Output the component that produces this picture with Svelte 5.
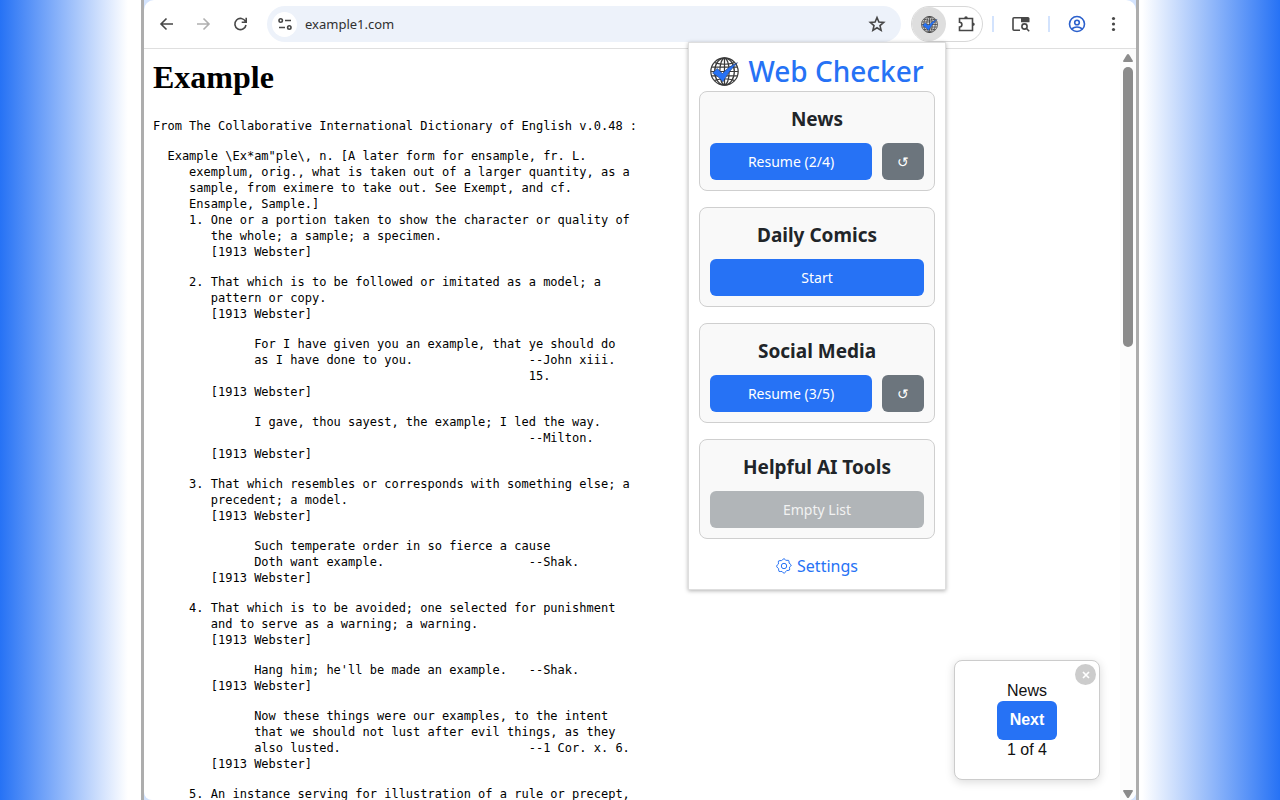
<script>
  let lists = $state([
    { name: 'News', done: 2, total: 4 },
    { name: 'Daily Comics', done: 0, total: 6 },
    { name: 'Social Media', done: 3, total: 5 },
    { name: 'Helpful AI Tools', done: 0, total: 0 }
  ]);

  let address = $state('example1.com');
  let showStepper = $state(true);

  // each entry is one block of the dictionary page
  const entries = [
    `From The Collaborative International Dictionary of English v.0.48 :`,
    `  Example \\Ex*am"ple\\, n. [A later form for ensample, fr. L.
     exemplum, orig., what is taken out of a larger quantity, as a
     sample, from eximere to take out. See Exempt, and cf.
     Ensample, Sample.]
     1. One or a portion taken to show the character or quality of
        the whole; a sample; a specimen.
        [1913 Webster]`,
    `     2. That which is to be followed or imitated as a model; a
        pattern or copy.
        [1913 Webster]`,
    `              For I have given you an example, that ye should do
              as I have done to you.                --John xiii.
                                                    15.
        [1913 Webster]`,
    `              I gave, thou sayest, the example; I led the way.
                                                    --Milton.
        [1913 Webster]`,
    `     3. That which resembles or corresponds with something else; a
        precedent; a model.
        [1913 Webster]`,
    `              Such temperate order in so fierce a cause
              Doth want example.                    --Shak.
        [1913 Webster]`,
    `     4. That which is to be avoided; one selected for punishment
        and to serve as a warning; a warning.
        [1913 Webster]`,
    `              Hang him; he'll be made an example.   --Shak.
        [1913 Webster]`,
    `              Now these things were our examples, to the intent
              that we should not lust after evil things, as they
              also lusted.                          --1 Cor. x. 6.
        [1913 Webster]`,
    `     5. An instance serving for illustration of a rule or precept,`
  ];

  function label(list) {
    if (list.total === 0) return 'Empty List';
    return list.done > 0 ? `Resume (${list.done}/${list.total})` : 'Start';
  }

  function advance(list) {
    list.done = (list.done + 1) % (list.total + 1);
  }

  function reset(list) {
    list.done = 0;
  }
</script>

{#snippet globe(cls)}
  <svg class={cls} viewBox="0 0 28 28" fill="none" aria-hidden="true">
    <g stroke="#3a3a3a" stroke-width="1.2">
      <circle cx="14" cy="14" r="13.200" />
      <ellipse cx="14" cy="14" rx="4.500" ry="13" />
      <ellipse cx="14" cy="14" rx="9.500" ry="13" />
      <path d="M14 1v26M1 14h26M4.500 5.500q9.500 3 19 0M2 9.800h24M2 18.200h24M4.500 22.500q9.500-3 19 0" />
    </g>
    <path d="M2.500 15.500 7 11l5 5Q17.500 9 26.500 5.500 18.500 13 12.500 24 8 18.500 2.500 15.500Z" fill="#2672f5" stroke="#223a6a" stroke-width="0.6" />
  </svg>
{/snippet}

<div class="backdrop">
  <div class="window">
    <header class="toolbar">
      <button class="icon-btn" aria-label="Back">
        <svg viewBox="0 0 20 20"><path d="M17 10H5M10.500 4.500 5 10l5.500 5.500" /></svg>
      </button>
      <button class="icon-btn dim" aria-label="Forward">
        <svg viewBox="0 0 20 20"><path d="M4 10h11.500M10.500 4.500 16 10l-5.500 5.500" /></svg>
      </button>
      <button class="icon-btn" aria-label="Reload">
        <svg viewBox="0 0 20 20"><path d="M15.500 7.500A5.600 5.600 0 1 0 16 11M16.200 3.800v4.500h-4.500" /></svg>
      </button>

      <div class="address">
        <button class="site-info" aria-label="Site information">
          <svg viewBox="0 0 20 20"><circle cx="5.700" cy="6.500" r="1.700" /><path d="M10 6.500h6M4 13.500h6" /><circle cx="14.300" cy="13.500" r="1.700" /></svg>
        </button>
        <input type="text" aria-label="Address" bind:value={address} />
        <button class="icon-btn" aria-label="Bookmark">
          <svg viewBox="0 0 20 20"><path d="m10 3.500 1.900 4.500 4.800.4-3.700 3.200 1.100 4.800-4.100-2.600-4.100 2.600L7 11.600 3.300 8.400 8.100 8Z" /></svg>
        </button>
      </div>

      <div class="extensions">
        <button class="ext-active" aria-label="Web Checker">{@render globe('globe-small')}</button>
        <button class="icon-btn" aria-label="Extensions">
          <svg viewBox="0 0 20 20"><path d="M3.500 4.500h13v12h-13v-3.500a2.300 2.300 0 0 0 0-4.800Z" /><path class="fill" d="M8.200 4.500a1.800 2.300 0 0 1 3.600 0ZM16.500 8.500a2.300 1.800 0 0 1 0 3.600Z" /></svg>
        </button>
      </div>

      <span class="divider"></span>
      <button class="icon-btn" aria-label="Search tabs">
        <svg viewBox="0 0 20 20"><path d="M9 16.200H3q-1 0-1-1V4.800q0-1 1-1h7" /><path class="fill" d="M10 3h7q1.500 0 1.500 1.500v3.700H10Z" /><circle cx="13.500" cy="12.500" r="2.600" /><path d="m15.500 14.500 2.700 2.700" /></svg>
      </button>
      <span class="divider"></span>
      <button class="icon-btn profile" aria-label="Profile">
        <svg viewBox="0 0 20 20"><circle cx="10" cy="10" r="7.500" /><circle cx="10" cy="8.500" r="2.300" /><path d="M4.500 15q5.500-4 11 0" /></svg>
      </button>
      <button class="icon-btn menu" aria-label="Menu">
        <svg viewBox="0 0 20 20"><g class="fill"><circle cx="9.500" cy="4.500" r="1.600" /><circle cx="9.500" cy="10" r="1.600" /><circle cx="9.500" cy="15.500" r="1.600" /></g></svg>
      </button>
    </header>

    <div class="viewport">
      <main>
        <h1>Example</h1>
        {#each entries as entry}
          <pre>{entry}</pre>
        {/each}
      </main>
      <div class="scrollbar" aria-hidden="true">
        <svg viewBox="0 0 10 8"><path d="M5 0q.6 0 1 .6L10 7q0 1-1 1H1q-1 0-1-1L4 .6Q4.400 0 5 0Z" /></svg>
        <div class="track"><div class="thumb"></div></div>
        <svg class="down" viewBox="0 0 10 8"><path d="M5 0q.6 0 1 .6L10 7q0 1-1 1H1q-1 0-1-1L4 .6Q4.400 0 5 0Z" /></svg>
      </div>
    </div>

    <section class="popup">
      <h2>{@render globe('globe-large')}Web Checker</h2>
      <div class="lists">
        {#each lists as list}
          <div class="card">
            <h3>{list.name}</h3>
            <div class="actions">
              <button class="primary" disabled={list.total === 0} onclick={() => advance(list)}>{label(list)}</button>
              {#if list.done > 0}
                <button class="reset" title="Start over" onclick={() => reset(list)}>↺</button>
              {/if}
            </div>
          </div>
        {/each}
      </div>
      <a class="settings" href="#settings">
        <svg viewBox="0 0 16 16" fill="none" stroke="currentColor"><circle cx="8" cy="8" r="2.700" /><path d="M6.800 1.500Q8-.2 9.200 1.500q.4 1.400 1.700.8 2.300-.6 2.200 1.600-.6 1.400.9 1.900 2.400 1.200.5 2.600-1.500.5-.9 1.900.8 2.300-1.600 2.200-1.400-.6-1.900.9Q8 16.500 6.700 14.400q-.5-1.500-1.900-.9-2.300.8-2.200-1.600.6-1.400-.9-1.900Q-.6 8 1.500 6.700q1.500-.5.9-1.900-.8-2.300 1.600-2.200 1.400.6 2.800-1.100Z" /></svg>
        Settings
      </a>
    </section>

    {#if showStepper}
      <aside class="stepper">
        <button class="close" aria-label="Close" onclick={() => (showStepper = false)}>
          <svg viewBox="0 0 8 8"><path d="m1 1 6 6M7 1 1 7" /></svg>
        </button>
        <span>News</span>
        <button class="next">Next</button>
        <span>1 of 4</span>
      </aside>
    {/if}
  </div>
</div>

<style>
  :global(body) {
    margin: 0;
  }

  .backdrop {
    height: 100vh;
    padding: 0 141px;
    box-sizing: border-box;
    overflow: hidden;
    background: linear-gradient(to right, #2672f5, #fff 128px, #fff calc(100% - 138px), #2672f5);
  }

  .window {
    position: relative;
    display: flex;
    flex-direction: column;
    height: 100%;
    box-sizing: border-box;
    border: solid #adadad;
    border-width: 0 3px;
    background: #d3e3fd;
  }

  button {
    padding: 0;
    border: none;
    background: none;
    font-family: inherit;
    cursor: pointer;
  }

  .toolbar {
    display: flex;
    align-items: center;
    height: 48px;
    padding: 0 12px;
    border-bottom: 1px solid #dfdfdf;
    border-radius: 10px 10px 0 0;
    background: #fff;
  }

  .icon-btn {
    display: flex;
    justify-content: center;
    width: 20px;
    margin-right: 17px;
    color: #474747;
  }

  .icon-btn svg,
  .site-info svg {
    width: 20px;
    height: 20px;
    fill: none;
    stroke: currentColor;
    stroke-width: 1.6;
  }

  .icon-btn .fill {
    fill: currentColor;
    stroke: none;
  }

  .dim {
    color: #b0b0b0;
  }

  .address {
    flex: 1;
    display: flex;
    align-items: center;
    gap: 8px;
    min-width: 0;
    height: 36px;
    padding-left: 5px;
    border-radius: 18px;
    background: #edf2fa;
  }

  .address .icon-btn {
    margin-right: 14px;
  }

  .site-info {
    display: flex;
    align-items: center;
    justify-content: center;
    width: 25px;
    height: 25px;
    border-radius: 50%;
    background: #fff;
    color: #474747;
  }

  .address input {
    flex: 1;
    min-width: 0;
    padding: 0;
    border: none;
    outline: none;
    background: none;
    color: #303030;
    font: 13px "Noto Sans", sans-serif;
  }

  .extensions {
    display: flex;
    align-items: center;
    gap: 10px;
    margin: 0 9px 0 10px;
    border: 1px solid #d8d8d8;
    border-radius: 18px;
  }

  .extensions .icon-btn {
    margin-right: 6px;
  }

  .ext-active {
    display: flex;
    align-items: center;
    justify-content: center;
    width: 34px;
    height: 34px;
    border-radius: 50%;
    background: #dedede;
  }

  :global(.globe-small) {
    width: 17px;
    height: 17px;
  }

  :global(.globe-large) {
    width: 29px;
    height: 29px;
  }

  .divider {
    width: 2px;
    height: 16px;
    margin-right: 17px;
    background: #d3e3fd;
  }

  .profile {
    color: #2b60cc;
  }

  .menu {
    margin-right: 0;
  }

  .viewport {
    flex: 1;
    display: flex;
    min-height: 0;
    border-radius: 0 0 8px 8px;
    background: #fff;
  }

  main {
    flex: 1;
    min-width: 0;
    padding-left: 9px;
    overflow: hidden;
  }

  h1 {
    margin: 8px 0 21px;
    font: bold 32px/40px "Liberation Serif", serif;
  }

  pre {
    margin: 0 0 14px;
    font: 12px/16px "DejaVu Sans Mono", monospace;
  }

  .scrollbar {
    display: flex;
    flex-direction: column;
    align-items: center;
    gap: 5px;
    width: 16px;
    padding: 5px 0 2px;
    box-sizing: border-box;
    border-radius: 0 0 8px 0;
    background: #fcfcfc;
  }

  .scrollbar svg {
    width: 10px;
    height: 8px;
    fill: #8b8b8b;
  }

  .scrollbar .down {
    transform: rotate(180deg);
  }

  .track {
    flex: 1;
  }

  .thumb {
    width: 10px;
    height: 39%;
    border-radius: 5px;
    background: #8b8b8b;
  }

  .popup {
    position: absolute;
    top: 42px;
    right: 190px;
    width: 258px;
    padding: 9px 10px 11px;
    box-sizing: border-box;
    border: 1px solid #dedede;
    background: #fff;
    box-shadow: 0 1px 4px rgba(0, 0, 0, 0.3);
    color: #212529;
    font-family: "Noto Sans", sans-serif;
  }

  .popup h2 {
    display: flex;
    align-items: center;
    justify-content: center;
    gap: 9px;
    margin: 0;
    color: #2672f5;
    font-size: 28px;
    font-weight: 500;
    line-height: 39px;
  }

  .lists {
    display: grid;
    gap: 16px;
  }

  .card {
    padding: 15px 10px 10px;
    border: 1px solid #cfcfcf;
    border-radius: 8px;
    background: #f9f9f9;
  }

  .card h3 {
    margin: 0 0 12px;
    font-size: 19px;
    font-weight: 700;
    line-height: 24px;
    text-align: center;
  }

  .actions {
    display: flex;
    gap: 10px;
  }

  .actions button {
    height: 37px;
    border-radius: 6px;
    color: #fff;
    font-size: 14px;
  }

  .actions .primary {
    flex: 1;
    background: #2672f5;
  }

  .actions .primary:disabled {
    background: #b1b5b8;
    color: #f2f2f2;
    cursor: default;
  }

  .actions .reset {
    width: 42px;
    background: #6c757d;
  }

  .settings {
    display: flex;
    align-items: center;
    justify-content: center;
    gap: 5px;
    margin-top: 15px;
    color: #2672f5;
    font-size: 16px;
    line-height: 24px;
    text-decoration: none;
  }

  .settings svg {
    width: 16px;
    height: 16px;
  }

  .stepper {
    position: absolute;
    right: 36px;
    bottom: 20px;
    display: flex;
    flex-direction: column;
    align-items: center;
    justify-content: center;
    width: 146px;
    height: 120px;
    box-sizing: border-box;
    border: 1px solid #ccc;
    border-radius: 8px;
    background: #fff;
    box-shadow: 0 2px 10px rgba(0, 0, 0, 0.15);
    color: #111;
    font: 16px/20px "Liberation Sans", sans-serif;
  }

  .next {
    width: 60px;
    height: 39px;
    border-radius: 6px;
    background: #2672f5;
    color: #fff;
    font-size: 16px;
    font-weight: bold;
  }

  .close {
    position: absolute;
    top: 3px;
    right: 3px;
    display: flex;
    align-items: center;
    justify-content: center;
    width: 21px;
    height: 21px;
    border-radius: 50%;
    background: #ccc;
  }

  .close svg {
    width: 8px;
    height: 8px;
    stroke: #fff;
    stroke-width: 1.7;
  }
</style>
